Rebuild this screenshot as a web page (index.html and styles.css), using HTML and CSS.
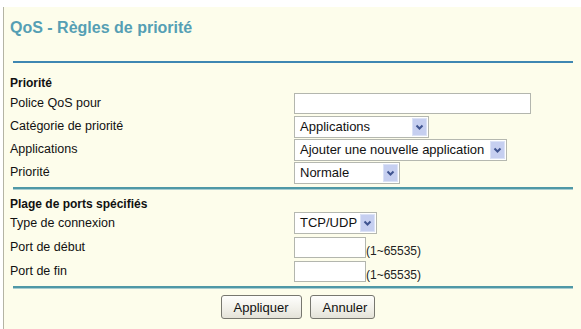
FILE: index.html
```html
<!DOCTYPE html>
<html lang="fr">
<head>
<meta charset="utf-8">
<title>QoS - Règles de priorité</title>
<link rel="stylesheet" href="styles.css">
</head>
<body>
<div class="frame">
  <h1 class="title">QoS - Règles de priorité</h1>
  <div class="rule rule-top"></div>

  <div class="group-head">Priorité</div>
  <div class="rows rows-a">
    <div class="label">Police QoS pour</div>
    <div class="field"><input class="text-input w-policy" type="text"></div>

    <div class="label">Catégorie de priorité</div>
    <div class="field">
      <div class="select w-cat"><span class="sel-text">Applications</span><span class="sel-arrow"><svg width="13" height="18" viewBox="0 0 13 18"><path d="M3.5 7.5 L6.5 10.5 L9.5 7.5" fill="none" stroke="#3f5490" stroke-width="2"/></svg></span></div>
    </div>

    <div class="label">Applications</div>
    <div class="field">
      <div class="select w-app"><span class="sel-text">Ajouter une nouvelle application</span><span class="sel-arrow"><svg width="13" height="18" viewBox="0 0 13 18"><path d="M3.5 7.5 L6.5 10.5 L9.5 7.5" fill="none" stroke="#3f5490" stroke-width="2"/></svg></span></div>
    </div>

    <div class="label">Priorité</div>
    <div class="field">
      <div class="select w-prio"><span class="sel-text">Normale</span><span class="sel-arrow"><svg width="13" height="18" viewBox="0 0 13 18"><path d="M3.5 7.5 L6.5 10.5 L9.5 7.5" fill="none" stroke="#3f5490" stroke-width="2"/></svg></span></div>
    </div>
  </div>
  <div class="rule rule-mid"></div>

  <div class="group-head head-b">Plage de ports spécifiés</div>
  <div class="rows rows-b">
    <div class="label">Type de connexion</div>
    <div class="field">
      <div class="select w-type"><span class="sel-text">TCP/UDP</span><span class="sel-arrow"><svg width="13" height="18" viewBox="0 0 13 18"><path d="M3.5 7.5 L6.5 10.5 L9.5 7.5" fill="none" stroke="#3f5490" stroke-width="2"/></svg></span></div>
    </div>

    <div class="label">Port de début</div>
    <div class="field port"><input class="text-input w-port" type="text"><span class="range">(1~65535)</span></div>

    <div class="label">Port de fin</div>
    <div class="field port"><input class="text-input w-port" type="text"><span class="range">(1~65535)</span></div>
  </div>
  <div class="rule rule-mid rule-bottom"></div>

  <div class="actions">
    <button class="btn btn-apply" type="button">Appliquer</button>
    <button class="btn btn-cancel" type="button">Annuler</button>
  </div>
</div>
</body>
</html>
```

FILE: styles.css
```css
html, body {
  margin: 0;
  padding: 0;
  background: #ffffff;
}

body {
  font-family: "Liberation Sans", Arial, sans-serif;
  color: #111;
}

.frame {
  margin-top: 7px;
  margin-left: 3px;
  border-left: 1px solid #b4b4a4;
  background: #fdfdeb;
  height: 322px;
  overflow: hidden;
}

.title {
  margin: 12px 0 0 6px;
  font-size: 16px;
  line-height: 18px;
  font-weight: bold;
  color: #559fb4;
}

.rule {
  height: 2px;
  margin: 0 8px 0 9px;
}

.rule-top {
  margin-top: 24px;
  background: #3f87b2;
}

.rule-mid {
  margin-top: 3px;
  background: #4f98a6;
  box-shadow: 0 1px 0 #a9cdd0;
}

.group-head {
  margin: 13px 0 0 6px;
  font-size: 12px;
  line-height: 14px;
  font-weight: bold;
  color: #111;
}

.head-b {
  margin-top: 8px;
}

.rows {
  display: grid;
  grid-template-columns: 284px auto;
  align-items: center;
  padding-left: 6px;
}

.rows-a {
  margin-top: 2px;
  grid-auto-rows: 23px;
}

.rows-b {
  grid-auto-rows: 24px;
}

.label {
  font-size: 12.5px;
  line-height: 15px;
  color: #111;
}

.field {
  display: flex;
  align-items: center;
}

.field.port {
  align-items: flex-end;
}

.text-input {
  box-sizing: border-box;
  height: 21px;
  margin: 0;
  padding: 0 3px;
  border: 1px solid #b3b6ae;
  background: #ffffff;
  font: 13px "Liberation Sans", Arial, sans-serif;
}

.w-policy { width: 237px; }
.w-port { width: 72px; }

.range {
  font-size: 12px;
  line-height: 14px;
  margin-left: 0;
  color: #222;
}

.select {
  box-sizing: border-box;
  height: 22px;
  display: flex;
  align-items: center;
  justify-content: space-between;
  border: 1px solid #b5b8b0;
  background: #ffffff;
  padding: 1px 1px 1px 5px;
}

.sel-text {
  font-size: 13px;
  line-height: 16px;
  color: #111;
  white-space: nowrap;
}

.sel-arrow {
  box-sizing: border-box;
  width: 15px;
  height: 18px;
  display: flex;
  justify-content: center;
  align-items: center;
  background: #c6cff0;
  border: 1px solid #dbe2f6;
}

.w-cat { width: 135px; }
.w-app { width: 213px; }
.w-prio { width: 106px; }
.w-type { width: 83px; }

.actions {
  display: flex;
  justify-content: center;
  gap: 8px;
  margin-top: 7px;
  padding-left: 10px;
}

.btn {
  box-sizing: border-box;
  height: 24px;
  margin: 0;
  padding: 0 12px;
  border: 1px solid #77776f;
  border-radius: 3px;
  background: linear-gradient(#fefefc, #f0efe8 60%, #e4e2d8);
  font: 13px "Liberation Sans", Arial, sans-serif;
  color: #111;
}

.btn-apply { width: 81px; }
.btn-cancel { width: 65px; }
```
